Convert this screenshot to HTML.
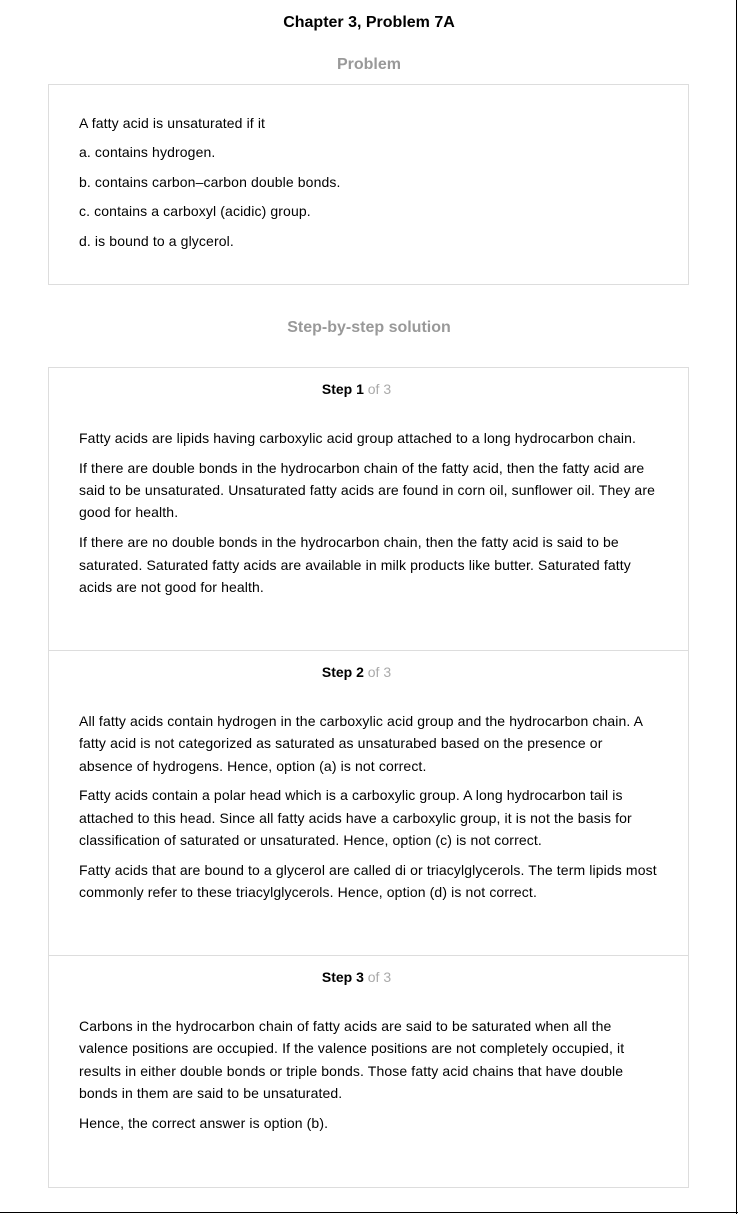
<!DOCTYPE html>
<html><head><meta charset="utf-8"><style>
*{margin:0;padding:0;box-sizing:border-box}
html,body{width:738px;height:1214px;background:#fff;overflow:hidden}
body{position:relative;font-family:"Liberation Sans",Arial,sans-serif;color:#000;font-size:14px}
.h{position:absolute;left:0;width:738px;text-align:center;font-weight:bold;font-size:16px;line-height:20px}
.box{position:absolute;left:48px;width:641px;border:1px solid #ddd}
.box p{line-height:22.3px;margin-bottom:7.6px;letter-spacing:0.12px}
.prob{top:84px;height:201px;padding:27px 30px 0 30px}
.prob p{line-height:22px;margin-bottom:7.4px}
.step{padding:10px 30px 0 30px;border-top:1px solid #ddd}
.step:first-child{border-top:none}
.sh{text-align:center;line-height:22px;font-size:14px;margin-bottom:27px;padding-right:24px}
.sh b{font-weight:bold}.sh span{color:#aaa}
</style></head><body>
<div class="h" style="top:13px;color:#000">Chapter 3, Problem 7A</div>
<div class="h" style="top:55px;color:#999">Problem</div>
<div class="box prob">
<p>A fatty acid is unsaturated if it</p>
<p>a. contains hydrogen.</p>
<p>b. contains carbon–carbon double bonds.</p>
<p>c. contains a carboxyl (acidic) group.</p>
<p>d. is bound to a glycerol.</p>
</div>
<div class="h" style="top:318px;color:#999">Step-by-step solution</div>
<div class="box" style="top:367px;height:821px">
<div class="step" style="height:282px">
<div class="sh"><b>Step 1</b> <span>of 3</span></div>
<p>Fatty acids are lipids having carboxylic acid group attached to a long hydrocarbon chain.</p>
<p>If there are double bonds in the hydrocarbon chain of the fatty acid, then the fatty acid are said to be unsaturated. Unsaturated fatty acids are found in corn oil, sunflower oil. They are good for health.</p>
<p>If there are no double bonds in the hydrocarbon chain, then the fatty acid is said to be saturated. Saturated fatty acids are available in milk products like butter. Saturated fatty acids are not good for health.</p>
</div>
<div class="step" style="height:305px">
<div class="sh"><b>Step 2</b> <span>of 3</span></div>
<p>All fatty acids contain hydrogen in the carboxylic acid group and the hydrocarbon chain. A fatty acid is not categorized as saturated as unsaturabed based on the presence or absence of hydrogens. Hence, option (a) is not correct.</p>
<p>Fatty acids contain a polar head which is a carboxylic group. A long hydrocarbon tail is attached to this head. Since all fatty acids have a carboxylic group, it is not the basis for classification of saturated or unsaturated. Hence, option (c) is not correct.</p>
<p>Fatty acids that are bound to a glycerol are called di or triacylglycerols. The term lipids most commonly refer to these triacylglycerols. Hence, option (d) is not correct.</p>
</div>
<div class="step" style="height:232px">
<div class="sh"><b>Step 3</b> <span>of 3</span></div>
<p>Carbons in the hydrocarbon chain of fatty acids are said to be saturated when all the valence positions are occupied. If the valence positions are not completely occupied, it results in either double bonds or triple bonds. Those fatty acid chains that have double bonds in them are said to be unsaturated.</p>
<p>Hence, the correct answer is option (b).</p>
</div>
</div>
<div style="position:absolute;left:736px;top:0;width:1px;height:1214px;background:#000"></div>
<div style="position:absolute;left:0;top:1212px;width:738px;height:1px;background:#000"></div>
</body></html>
